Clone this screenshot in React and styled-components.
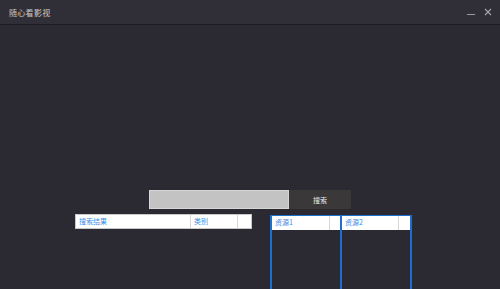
import styled, { createGlobalStyle } from "styled-components";

const Global = createGlobalStyle`
  html, body {
    margin: 0;
    padding: 0;
    background: #2b2a32;
    font-family: "Noto Sans CJK SC", "Noto Sans", sans-serif;
  }
`;

const Window = styled.div`
  width: 500px;
  height: 289px;
  display: flex;
  flex-direction: column;
  overflow: hidden;
  background: #2b2a32;
`;

const TitleBar = styled.div`
  height: 24px;
  flex-shrink: 0;
  display: flex;
  align-items: center;
  justify-content: space-between;
  padding: 0 8px 0 9px;
  background: #302f37;
  border-bottom: 1px solid #1c1c20;
`;

const Title = styled.span`
  color: #c9c9cc;
  font-size: 8px;
  letter-spacing: 0.3px;
`;

const Controls = styled.div`
  display: flex;
  align-items: center;
  gap: 8px;
  color: #9a9aa0;
`;

const Main = styled.div`
  flex: 1;
  display: flex;
  flex-direction: column;
  padding-top: 165px;
`;

const SearchRow = styled.div`
  display: flex;
  justify-content: center;
`;

const SearchInput = styled.div`
  width: 138px;
  height: 17px;
  background: #c3c3c3;
  border: 1px solid #d6d6d6;
`;

const SearchButton = styled.div`
  width: 62px;
  height: 19px;
  background: #3b3839;
  color: #e8e8e8;
  font-size: 7px;
  display: flex;
  align-items: center;
  justify-content: center;
`;

const Lower = styled.div`
  flex: 1;
  display: flex;
  align-items: flex-start;
  padding: 5px 0 0 75px;
`;

const Table = styled.div`
  width: 175px;
  height: 13px;
  background: #fff;
  border: 1px solid #c8c8c8;
  display: flex;
`;

const Cell = styled.div`
  width: ${(p) => p.w}px;
  flex-shrink: 0;
  height: 100%;
  box-sizing: border-box;
  border-right: ${(p) => (p.last ? "none" : "1px solid #d8d8d8")};
  color: #3a8ee6;
  font-size: 7px;
  line-height: 13px;
  padding-left: 3px;
  overflow: hidden;
  white-space: nowrap;
`;

const Sources = styled.div`
  display: flex;
  margin-left: 18px;
  margin-top: 1px;
  align-self: stretch;
`;

const Panel = styled.div`
  width: 68px;
  border-left: 2px solid #1d6fcf;
  border-right: ${(p) => (p.end ? "2px solid #1d6fcf" : "none")};
  display: flex;
  flex-direction: column;
`;

const PanelHead = styled.div`
  height: 14px;
  background: #fff;
  display: flex;
  border-top: 1px solid #1d6fcf;
`;

export default function App() {
  return (
    <Window>
      <Global />
      <TitleBar>
        <Title>随心看影视</Title>
        <Controls>
          <svg width="9" height="9" viewBox="0 0 9 9">
            <path d="M0 6.5h8" stroke="#9a9aa0" strokeWidth="1" />
          </svg>
          <svg width="8" height="8" viewBox="0 0 8 8">
            <path d="M1 1l6 6M7 1l-6 6" stroke="#a4a4aa" strokeWidth="1.2" />
          </svg>
        </Controls>
      </TitleBar>
      <Main>
        <SearchRow>
          <SearchInput />
          <SearchButton>搜索</SearchButton>
        </SearchRow>
        <Lower>
          <Table>
            <Cell w={115}>搜索结果</Cell>
            <Cell w={47}>类别</Cell>
            <Cell w={13} last />
          </Table>
          <Sources>
            <Panel>
              <PanelHead>
                <Cell w={58}>资源1</Cell>
                <Cell w={10} last />
              </PanelHead>
            </Panel>
            <Panel end>
              <PanelHead>
                <Cell w={57}>资源2</Cell>
                <Cell w={11} last />
              </PanelHead>
            </Panel>
          </Sources>
        </Lower>
      </Main>
    </Window>
  );
}
